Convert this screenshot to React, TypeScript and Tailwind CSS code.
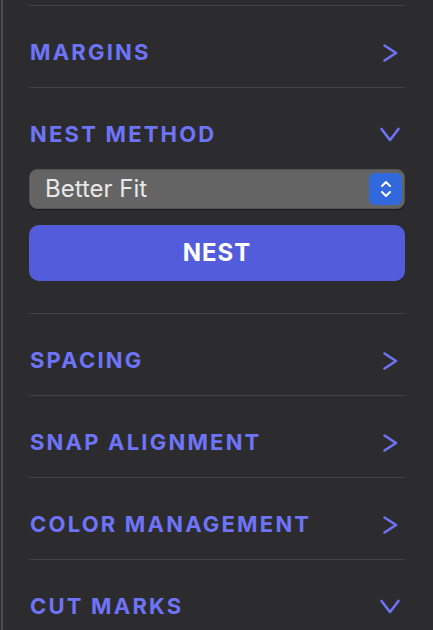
import { ReactNode } from "react";

const font = { fontFamily: "Inter, 'Noto Sans', sans-serif" };

function ChevronRight() {
    return (
        <svg viewBox="0 0 24 24" className="h-6 w-6" fill="none" stroke="#6e74f7" strokeWidth={2.6} strokeLinecap="round" strokeLinejoin="round">
            <path d="M6.5 4.5L18 12L6.5 19.5" />
        </svg>
    );
}

function ChevronDown() {
    return (
        <svg viewBox="0 0 24 24" className="h-6 w-6" fill="none" stroke="#6e74f7" strokeWidth={2.6} strokeLinecap="round" strokeLinejoin="round">
            <path d="M3.5 6L12 17L20.5 6" />
        </svg>
    );
}

function Section({ title, open, children }: { title: string; open?: boolean; children?: ReactNode }) {
    return (
        <div className="border-t border-[#434345]">
            <div className="flex h-[81px] items-center justify-between pt-[12px] pl-px pr-[3px]">
                <span className="text-[22px] font-bold tracking-[0.1em] text-[#6e74f7]">
                    {title}
                </span>
                {open ? <ChevronDown /> : <ChevronRight />}
            </div>
            {open && children}
        </div>
    );
}

export default function App() {
    return (
        <div className="h-[630px] w-full overflow-hidden bg-[#2c2c2e]" style={font}>
            <div className="flex h-full">
                <div className="w-px bg-[#2c2c2e]" />
                <div className="w-[2px] bg-[#4e4e50]" />
                <div className="flex-1 pl-[26px] pr-[28px] pt-[5px]">
                    <Section title="MARGINS" />
                    <Section title="NEST METHOD" open>
                        <div className="flex flex-col gap-[16px] pb-[32px]">
                            <div className="flex h-[40px] items-center justify-between rounded-[8px] border border-[#555557] bg-[#646464] pl-[15px] pr-[2px] shadow-[0_1px_1px_rgba(0,0,0,0.4)]">
                                <span className="text-[24px] text-[#e8e8e8]">Better Fit</span>
                                <div className="flex h-[32px] w-[33px] flex-col items-center justify-center rounded-[6px] bg-[#3168dc]">
                                    <svg viewBox="0 0 20 24" className="h-[24px] w-[20px]" fill="none" stroke="#ffffff" strokeWidth={2} strokeLinecap="round" strokeLinejoin="round">
                                        <path d="M6 9L10 5L14 9" />
                                        <path d="M6 15L10 19L14 15" />
                                    </svg>
                                </div>
                            </div>
                            <button className="flex h-[56px] items-center justify-center rounded-[10px] bg-[#535ddb] text-[24px] font-bold tracking-[0.04em] text-white">
                                NEST
                            </button>
                        </div>
                    </Section>
                    <Section title="SPACING" />
                    <Section title="SNAP ALIGNMENT" />
                    <Section title="COLOR MANAGEMENT" />
                    <Section title="CUT MARKS" open />
                </div>
            </div>
        </div>
    );
}
